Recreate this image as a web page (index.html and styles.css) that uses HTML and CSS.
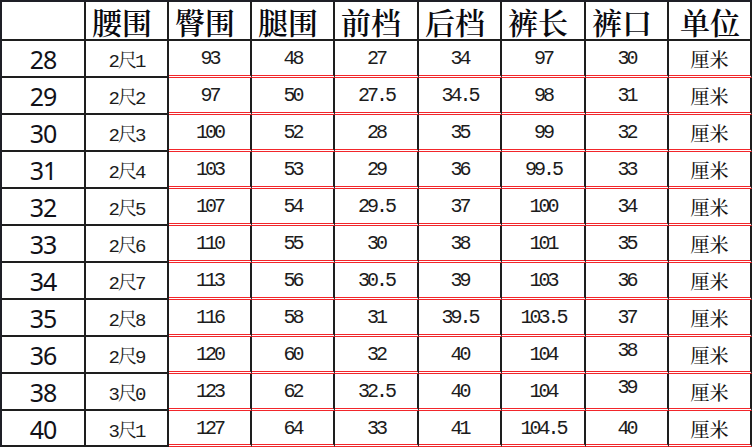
FILE: index.html
```html
<!DOCTYPE html>
<html lang="zh">
<head>
<meta charset="utf-8">
<title>尺码表</title>
<link rel="stylesheet" href="styles.css">
</head>
<body>
<div class="size-table">
  <div class="cell head"></div><div class="cell head">腰围</div><div class="cell head">臀围</div><div class="cell head">腿围</div><div class="cell head">前档</div><div class="cell head">后档</div><div class="cell head">裤长</div><div class="cell head">裤口</div><div class="cell head unit-h">单位</div>

  <div class="cell size">28</div><div class="cell waist">2尺1</div><div class="cell num">93</div><div class="cell num">48</div><div class="cell num">27</div><div class="cell num">34</div><div class="cell num">97</div><div class="cell num">30</div><div class="cell num unit">厘米</div>
  <div class="cell size">29</div><div class="cell waist">2尺2</div><div class="cell num">97</div><div class="cell num">50</div><div class="cell num">27.5</div><div class="cell num">34.5</div><div class="cell num">98</div><div class="cell num">31</div><div class="cell num unit">厘米</div>
  <div class="cell size">30</div><div class="cell waist">2尺3</div><div class="cell num">100</div><div class="cell num">52</div><div class="cell num">28</div><div class="cell num">35</div><div class="cell num">99</div><div class="cell num">32</div><div class="cell num unit">厘米</div>
  <div class="cell size">31</div><div class="cell waist">2尺4</div><div class="cell num">103</div><div class="cell num">53</div><div class="cell num">29</div><div class="cell num">36</div><div class="cell num">99.5</div><div class="cell num">33</div><div class="cell num unit">厘米</div>
  <div class="cell size">32</div><div class="cell waist">2尺5</div><div class="cell num">107</div><div class="cell num">54</div><div class="cell num">29.5</div><div class="cell num">37</div><div class="cell num">100</div><div class="cell num">34</div><div class="cell num unit">厘米</div>
  <div class="cell size">33</div><div class="cell waist">2尺6</div><div class="cell num">110</div><div class="cell num">55</div><div class="cell num">30</div><div class="cell num">38</div><div class="cell num">101</div><div class="cell num">35</div><div class="cell num unit">厘米</div>
  <div class="cell size">34</div><div class="cell waist">2尺7</div><div class="cell num">113</div><div class="cell num">56</div><div class="cell num">30.5</div><div class="cell num">39</div><div class="cell num">103</div><div class="cell num">36</div><div class="cell num unit">厘米</div>
  <div class="cell size">35</div><div class="cell waist">2尺8</div><div class="cell num">116</div><div class="cell num">58</div><div class="cell num">31</div><div class="cell num">39.5</div><div class="cell num">103.5</div><div class="cell num">37</div><div class="cell num unit">厘米</div>
  <div class="cell size">36</div><div class="cell waist">2尺9</div><div class="cell num">120</div><div class="cell num">60</div><div class="cell num">32</div><div class="cell num">40</div><div class="cell num">104</div><div class="cell num raised">38</div><div class="cell num unit">厘米</div>
  <div class="cell size">38</div><div class="cell waist">3尺0</div><div class="cell num">123</div><div class="cell num">62</div><div class="cell num">32.5</div><div class="cell num">40</div><div class="cell num">104</div><div class="cell num raised">39</div><div class="cell num unit">厘米</div>
  <div class="cell size">40</div><div class="cell waist">3尺1</div><div class="cell num">127</div><div class="cell num">64</div><div class="cell num">33</div><div class="cell num">41</div><div class="cell num">104.5</div><div class="cell num">40</div><div class="cell num unit">厘米</div>
</div>
</body>
</html>
```
FILE: styles.css
```css
html, body {
  margin: 0;
  padding: 0;
  background: #ffffff;
}

.size-table {
  display: grid;
  grid-template-columns: 84px 83px 83px 83px 84px 83px 84px 83px 83px;
  grid-template-rows: 39px repeat(10, 37px) 36px;
  width: 752px;
  box-sizing: border-box;
  border-left: 2px solid #1e1f26;
  border-top: 2px solid #1e1f26;
}

.cell {
  box-sizing: border-box;
  display: flex;
  align-items: center;
  justify-content: center;
  border-right: 2px solid #1e1e1e;
  border-bottom: 2px solid #1e1e1e;
  white-space: nowrap;
}

.head {
  justify-content: flex-start;
  padding-left: 6px;
  padding-top: 2px;
  font-family: "Noto Serif CJK SC", "Noto Sans CJK SC", serif;
  font-weight: 600;
  font-size: 30px;
  line-height: 1.15;
  color: #0a0a10;
}

.head.unit-h {
  padding-left: 11px;
}

.size {
  font-family: "Noto Sans", "Liberation Sans", sans-serif;
  font-size: 25px;
  letter-spacing: -1px;
  color: #111118;
  padding-top: 1px;
}

.waist,
.num {
  font-family: "Liberation Mono", "Noto Serif CJK SC", "Noto Sans CJK SC", monospace;
  font-size: 20px;
  letter-spacing: -3px;
  color: #1c1c1c;
  padding-top: 1px;
}

.waist {
  font-size: 19px;
  letter-spacing: -2px;
}

.num {
  border-bottom: 3px double #f2262b;
}

.unit {
  font-family: "Noto Serif CJK SC", "Noto Sans CJK SC", serif;
  font-size: 19px;
  font-weight: 500;
  letter-spacing: 0;
  color: #141414;
}

.raised {
  padding-bottom: 9px;
}
```
